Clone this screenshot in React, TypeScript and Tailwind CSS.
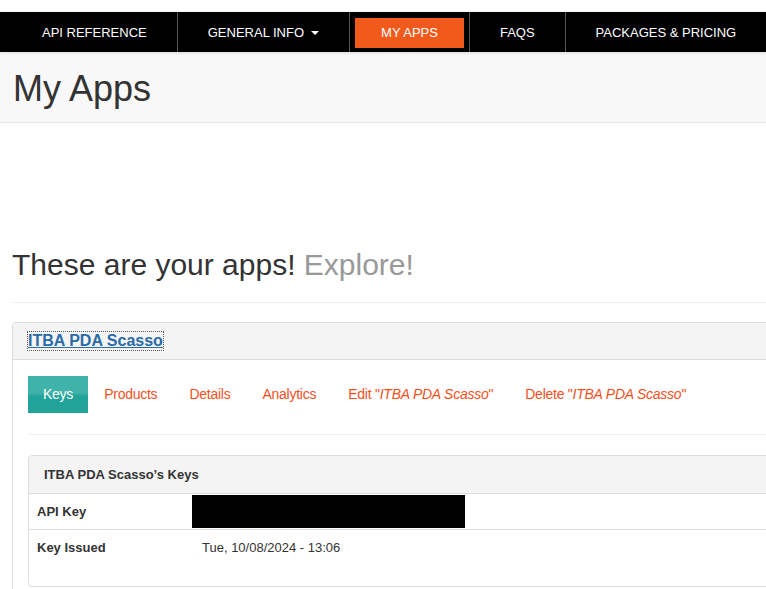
import React from "react";

const navItems = ["API REFERENCE", "GENERAL INFO", "MY APPS", "FAQS", "PACKAGES & PRICING"];

export default function App() {
  return (
    <div className="w-[766px] h-[589px] overflow-hidden bg-white text-[#333] font-['Liberation_Sans',Arial,sans-serif]">
      <div className="h-[12px]" />
      <nav className="h-[40px] bg-black pl-[12px] flex shadow-[0_1px_3px_rgba(0,0,0,0.12)] relative">
        {navItems.map((item, i) => {
          const active = item === "MY APPS";
          return (
            <div
              key={item}
              className={`h-full flex items-center pt-[1px] text-[13px] text-white shrink-0 ${i < navItems.length - 1 ? "border-r border-[#555]" : ""} ${active ? "px-[5px]" : "px-[30px]"}`}
            >
              {active ? (
                <div className="h-[30px] bg-[#f15a1a] px-[26px] flex items-center">{item}</div>
              ) : (
                <span className="flex items-center">
                  {item}
                  {item === "GENERAL INFO" && (
                    <span className="ml-[7px] inline-block w-0 h-0 border-x-[4px] border-x-transparent border-t-[4px] border-t-white" />
                  )}
                </span>
              )}
            </div>
          );
        })}
      </nav>
      <div className="h-[71px] bg-[#f8f8f8] border-b border-[#e7e7e7] pl-[13px] pt-[17px]">
        <h1 className="text-[36px] leading-[40px] text-[#333]">My Apps</h1>
      </div>
      <div className="w-[830px] pl-[12px]">
        <h2 className="mt-[125px] text-[30px] leading-[33px] text-[#333]">
          These are your apps! <span className="text-[#999]">Explore!</span>
        </h2>
        <div className="mt-[21px] border-t border-[#eee]" />
        <div className="mt-[19px] border border-[#ddd] rounded-[4px] h-[300px]">
          <div className="h-[37px] bg-[#f4f4f4] border-b border-[#ddd] rounded-t-[4px] pl-[15px] flex items-center">
            <a className="text-[16px] font-bold text-[#2a6aa6] underline outline-1 outline-dotted outline-[#555] leading-[18px]">
              ITBA PDA Scasso
            </a>
          </div>
          <div className="pl-[15px]">
            <div className="mt-[16px] flex items-center text-[14px] tracking-[-0.25px]">
              <div className="h-[37px] px-[15px] flex items-center text-white bg-[linear-gradient(to_bottom,#3fb2a9_0%,#3fb2a9_45%,#22a399_55%,#22a399_100%)]">
                Keys
              </div>
              <span className="px-[16px] text-[#f4511e]">Products</span>
              <span className="px-[16px] text-[#f4511e]">Details</span>
              <span className="px-[16px] text-[#f4511e]">Analytics</span>
              <span className="px-[16px] text-[#f4511e]">
                Edit "<i>ITBA PDA Scasso</i>"
              </span>
              <span className="px-[16px] text-[#f4511e]">
                Delete "<i>ITBA PDA Scasso</i>"
              </span>
            </div>
            <div className="mt-[21px] border-t border-[#eee]" />
            <div className="mt-[20px] border border-[#ddd] rounded-[4px] h-[132px]">
              <div className="h-[38px] bg-[#f4f4f4] border-b border-[#ddd] rounded-t-[4px] pl-[15px] flex items-center text-[13px] font-bold text-[#333]">
                ITBA PDA Scasso’s Keys
              </div>
              <div className="flex h-[36px] border-b border-[#ddd] items-center">
                <div className="w-[163px] pl-[8px] text-[13px] font-bold text-[#333]">API Key</div>
                <div className="w-[273px] h-[33px] bg-black" />
              </div>
              <div className="flex h-[36px] items-center">
                <div className="w-[163px] pl-[8px] text-[13px] font-bold text-[#333]">Key Issued</div>
                <div className="pl-[10px] text-[13px] text-[#333]">Tue, 10/08/2024 - 13:06</div>
              </div>
            </div>
          </div>
        </div>
      </div>
    </div>
  );
}
